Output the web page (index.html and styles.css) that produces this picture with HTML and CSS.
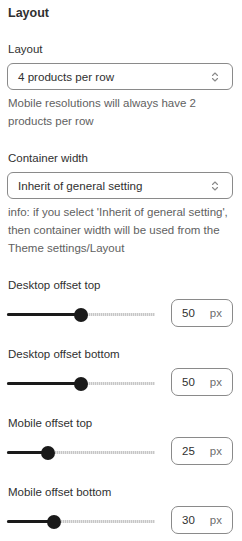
FILE: index.html
```html
<!DOCTYPE html>
<html lang="en">
<head>
<meta charset="utf-8">
<title>Layout</title>
<link rel="stylesheet" href="styles.css">
</head>
<body>
<div class="panel">
  <h2 class="title">Layout</h2>

  <div class="field">
    <div class="label">Layout</div>
    <div class="select">
      <span class="select-text">4 products per row</span>
      <svg class="chev" width="8" height="12" viewBox="0 0 8 12"><path d="M1.5 4.5 L4 2 L6.5 4.5 M1.5 7.5 L4 10 L6.5 7.5" fill="none" stroke="#8a8a8a" stroke-width="1.1" stroke-linecap="round" stroke-linejoin="round"/></svg>
    </div>
    <p class="help">Mobile resolutions will always have 2 products per row</p>
  </div>

  <div class="field">
    <div class="label">Container width</div>
    <div class="select">
      <span class="select-text">Inherit of general setting</span>
      <svg class="chev" width="8" height="12" viewBox="0 0 8 12"><path d="M1.5 4.5 L4 2 L6.5 4.5 M1.5 7.5 L4 10 L6.5 7.5" fill="none" stroke="#8a8a8a" stroke-width="1.1" stroke-linecap="round" stroke-linejoin="round"/></svg>
    </div>
    <p class="help">info: if you select 'Inherit of general setting', then container width will be used from the Theme settings/Layout</p>
  </div>

  <div class="range-field">
    <div class="label">Desktop offset top</div>
    <div class="range-row">
      <div class="slider" style="--v:50"><div class="rest"></div><div class="fill"></div><div class="thumb"></div></div>
      <div class="num"><span class="val">50</span><span class="unit">px</span></div>
    </div>
  </div>

  <div class="range-field">
    <div class="label">Desktop offset bottom</div>
    <div class="range-row">
      <div class="slider" style="--v:50"><div class="rest"></div><div class="fill"></div><div class="thumb"></div></div>
      <div class="num"><span class="val">50</span><span class="unit">px</span></div>
    </div>
  </div>

  <div class="range-field">
    <div class="label">Mobile offset top</div>
    <div class="range-row">
      <div class="slider" style="--v:25"><div class="rest"></div><div class="fill"></div><div class="thumb"></div></div>
      <div class="num"><span class="val">25</span><span class="unit">px</span></div>
    </div>
  </div>

  <div class="range-field">
    <div class="label">Mobile offset bottom</div>
    <div class="range-row">
      <div class="slider" style="--v:30"><div class="rest"></div><div class="fill"></div><div class="thumb"></div></div>
      <div class="num"><span class="val">30</span><span class="unit">px</span></div>
    </div>
  </div>
</div>
</body>
</html>
```

FILE: styles.css
```css
* { box-sizing: border-box; }
html, body { margin: 0; padding: 0; background: #fff; }
body {
  font-family: "Liberation Sans", Arial, sans-serif;
  color: #303030;
  font-size: 11.5px;
}
.panel {
  padding: 4px 9px 0 7px;
}
.title {
  margin: 0 0 18px 1px;
  font-size: 12.5px;
  font-weight: 700;
  line-height: 18px;
  color: #303030;
}
.field { margin-bottom: 19px; }
.label {
  line-height: 18px;
  margin-left: 1px;
  color: #303030;
}
.select {
  margin-top: 5px;
  height: 27px;
  border: 1px solid #8a8a8a;
  border-radius: 6px;
  display: flex;
  align-items: center;
  justify-content: space-between;
  padding: 0 13px 0 10px;
  font-size: 11.6px;
  color: #303030;
}
.chev { display: block; margin-top: 1px; }
.help {
  margin: 4px 0 0 1px;
  line-height: 18px;
  color: #616161;
  font-size: 11.5px;
}
.range-field { margin-bottom: 18px; }
.range-row {
  margin-top: 5px;
  height: 28px;
  display: flex;
  align-items: center;
  justify-content: space-between;
}
.slider {
  position: relative;
  width: 148px;
  height: 14px;
  margin-top: 3px;
}
.rest {
  position: absolute;
  left: 0; right: 0;
  top: 5.5px;
  height: 3px;
  background: repeating-linear-gradient(90deg, #c6c6c6 0 1px, #e6e6e6 1px 2px);
}
.fill {
  position: absolute;
  left: 0;
  top: 5.5px;
  height: 3px;
  border-radius: 2px;
  width: calc(var(--v) * 1.34px + 7px);
  background: #1a1a1a;
}
.thumb {
  position: absolute;
  top: 0;
  left: calc(var(--v) * 1.34px);
  width: 14px;
  height: 14px;
  border-radius: 50%;
  background: #1a1a1a;
}
.num {
  width: 62px;
  height: 28px;
  border: 1px solid #8a8a8a;
  border-radius: 7px;
  display: flex;
  align-items: center;
  justify-content: space-between;
  padding: 0 10px 0 10px;
  font-size: 11.5px;
}
.val { color: #303030; }
.unit { color: #6d6d6d; }
```
